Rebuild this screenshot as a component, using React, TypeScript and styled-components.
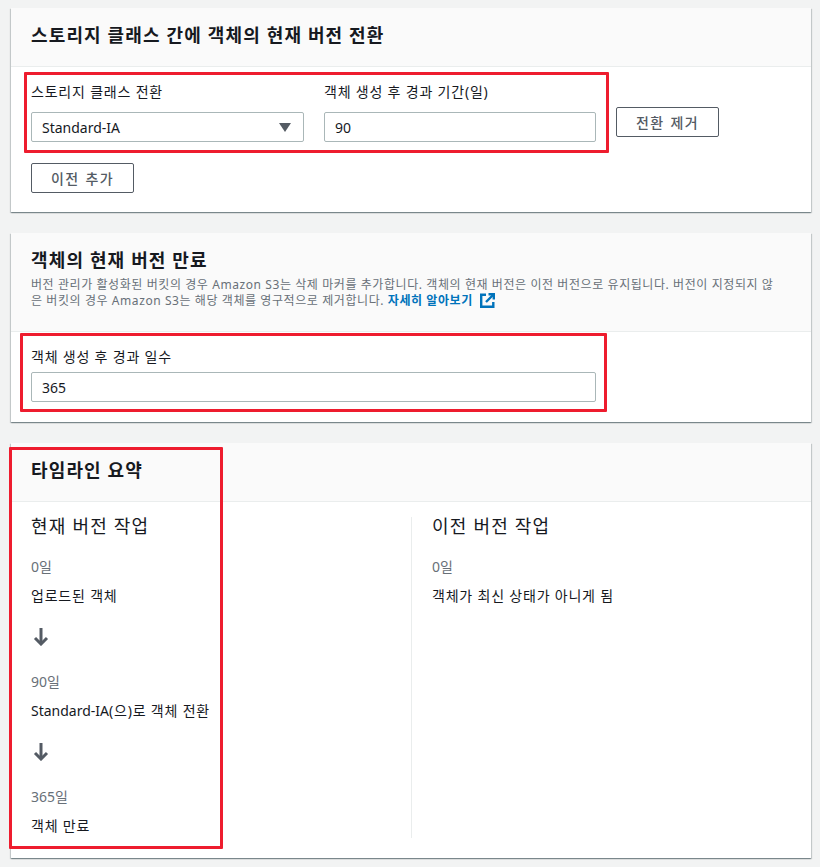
import React from "react";
import styled, { createGlobalStyle } from "styled-components";

const Global = createGlobalStyle`
  html, body { margin: 0; padding: 0; background: #f2f3f3; }
  body { font-family: "Noto Sans", "Noto Sans CJK KR", sans-serif; color: #16191f; }
  * { box-sizing: border-box; }
`;

const Page = styled.div`
  width: 820px;
  height: 867px;
  padding: 8px 9px 0 11px;
  display: flex;
  flex-direction: column;
  gap: 21px;
  overflow: hidden;
`;

const Card = styled.section`
  position: relative;
  background: #fff;
  box-shadow: 0 1px 1px 0 rgba(0, 28, 36, 0.3), 1px 1px 1px 0 rgba(0, 28, 36, 0.15), -1px 1px 1px 0 rgba(0, 28, 36, 0.15);
`;

const CardHeader = styled.header<{ $h: number }>`
  height: ${(p) => p.$h}px;
  padding: 15px 20px 0;
  background: #fafafa;
  border-bottom: 1px solid #eaeded;
`;

const Title = styled.h2`
  margin: 0;
  font-size: 18px;
  line-height: 25px;
  font-weight: 700;
  letter-spacing: 1.14px;
  color: #16191f;
`;

const Description = styled.p`
  margin: 4px 0 0;
  width: 750px;
  font-size: 12px;
  line-height: 16px;
  letter-spacing: 0.58px;
  word-break: break-all;
  color: #687078;
`;

const Latin = styled.span`
  letter-spacing: 0;
`;

const LearnLink = styled.a`
  color: #0073bb;
  font-weight: 700;
  display: inline;
`;

const ExternalIcon = styled.svg`
  width: 15px;
  height: 15px;
  margin-left: 7px;
  vertical-align: -3px;
`;

const Highlight = styled.div<{ $l: number; $t: number; $w: number; $h: number }>`
  position: absolute;
  left: ${(p) => p.$l}px;
  top: ${(p) => p.$t}px;
  width: ${(p) => p.$w}px;
  height: ${(p) => p.$h}px;
  border: 3px solid #ee1c2e;
  border-radius: 1px;
  pointer-events: none;
`;

const TransitionBody = styled.div`
  padding: 15px 20px 21px;
  height: 145px;
`;

const FieldRow = styled.div`
  display: flex;
  align-items: flex-start;
  gap: 20px;
`;

const Field = styled.div<{ $w: number }>`
  width: ${(p) => p.$w}px;
`;

const Label = styled.div<{ $gap: number }>`
  font-size: 14px;
  line-height: 20px;
  letter-spacing: 0.8px;
  color: #16191f;
  margin-bottom: ${(p) => p.$gap}px;
`;

const InputBox = styled.div`
  height: 30px;
  padding: 0 10px;
  display: flex;
  align-items: center;
  justify-content: space-between;
  background: #fff;
  border: 1px solid #aab7b8;
  border-radius: 2px;
  font-size: 14px;
  color: #16191f;
`;

const Caret = styled.svg`
  width: 12px;
  height: 9px;
  margin-right: 2px;
`;

const Button = styled.button<{ $mt: number }>`
  display: block;
  width: 103px;
  height: 30px;
  margin-top: ${(p) => p.$mt}px;
  padding: 0;
  background: #fff;
  border: 1px solid #545b64;
  border-radius: 2px;
  font-family: inherit;
  font-size: 14px;
  font-weight: 500;
  letter-spacing: 1.4px;
  word-spacing: 1px;
  color: #545b64;
`;

const ExpiryBody = styled.div`
  padding: 15px 20px 0;
  height: 90px;
`;

const TimelineBody = styled.div`
  display: grid;
  grid-template-columns: 400px 400px;
  padding-top: 15px;
  height: 356px;
`;

const Column = styled.div<{ $divider?: boolean }>`
  height: 321px;
  padding-left: 20px;
  border-left: ${(p) => (p.$divider ? "1px solid #eaeded" : "none")};
`;

const ColumnTitle = styled.h3`
  margin: 0 0 22px;
  font-size: 18px;
  line-height: 18px;
  font-weight: 400;
  letter-spacing: 1.2px;
  color: #16191f;
`;

const Day = styled.div`
  font-size: 14px;
  line-height: 20px;
  color: #687078;
  margin-bottom: 9px;
`;

const Step = styled.div`
  font-size: 14px;
  line-height: 20px;
  letter-spacing: 0.8px;
  color: #16191f;
`;

const Arrow = styled.svg`
  display: block;
  width: 16px;
  height: 18px;
  margin: 21.5px 0 26.5px 2px;
`;

const DownArrow = () => (
  <Arrow viewBox="0 0 16 18" fill="none" stroke="#545b64" strokeWidth="3">
    <path d="M8 0v15.5" />
    <path d="M2 10 8 16l6-6" />
  </Arrow>
);

export default function App() {
  return (
    <>
      <Global />
      <Page>
        <Card>
          <CardHeader $h={59}>
            <Title>스토리지 클래스 간에 객체의 현재 버전 전환</Title>
          </CardHeader>
          <TransitionBody>
            <FieldRow>
              <Field $w={273}>
                <Label $gap={10}>스토리지 클래스 전환</Label>
                <InputBox>
                  Standard-IA
                  <Caret viewBox="0 0 12 9">
                    <path d="M0 0h12L6 9z" fill="#545b64" />
                  </Caret>
                </InputBox>
              </Field>
              <Field $w={272}>
                <Label $gap={10}>객체 생성 후 경과 기간(일)</Label>
                <InputBox>90</InputBox>
              </Field>
              <Button $mt={25}>전환 제거</Button>
            </FieldRow>
            <Button $mt={21}>이전 추가</Button>
          </TransitionBody>
          <Highlight $l={13} $t={64} $w={585} $h={81} />
        </Card>

        <Card>
          <CardHeader $h={99}>
            <Title>객체의 현재 버전 만료</Title>
            <Description>
              버전 관리가 활성화된 버킷의 경우 Amazon S3는 삭제 마커를 추가합니다. 객체의 현재 버전은 이전 버전으로 유지됩니다. 버전이 지정되지 않은 버킷의 경우 Amazon S3는 해당 객체를 영구적으로 제거합니다.{" "}
              <LearnLink>
                자세히 알아보기
                <ExternalIcon viewBox="0 0 15 15" fill="none" stroke="#0073bb" strokeWidth="2.4">
                  <path d="M6 1.7H1.2v12.1h12.1V9" />
                  <path d="M8.5 1.2h5.3v5.3" />
                  <path d="M13.5 1.5 6 9" />
                </ExternalIcon>
              </LearnLink>
            </Description>
          </CardHeader>
          <ExpiryBody>
            <Field $w={565}>
              <Label $gap={5}>객체 생성 후 경과 일수</Label>
              <InputBox>365</InputBox>
            </Field>
          </ExpiryBody>
          <Highlight $l={9} $t={100} $w={587} $h={79} />
        </Card>

        <Card>
          <CardHeader $h={59}>
            <Title>타임라인 요약</Title>
          </CardHeader>
          <TimelineBody>
            <Column>
              <ColumnTitle>현재 버전 작업</ColumnTitle>
              <Day>0일</Day>
              <Step>업로드된 객체</Step>
              <DownArrow />
              <Day>90일</Day>
              <Step><Latin>Standard-IA</Latin>(으)로 객체 전환</Step>
              <DownArrow />
              <Day>365일</Day>
              <Step>객체 만료</Step>
            </Column>
            <Column $divider>
              <ColumnTitle>이전 버전 작업</ColumnTitle>
              <Day>0일</Day>
              <Step>객체가 최신 상태가 아니게 됨</Step>
            </Column>
          </TimelineBody>
          <Highlight $l={-2} $t={4} $w={214} $h={402} />
        </Card>
      </Page>
    </>
  );
}
